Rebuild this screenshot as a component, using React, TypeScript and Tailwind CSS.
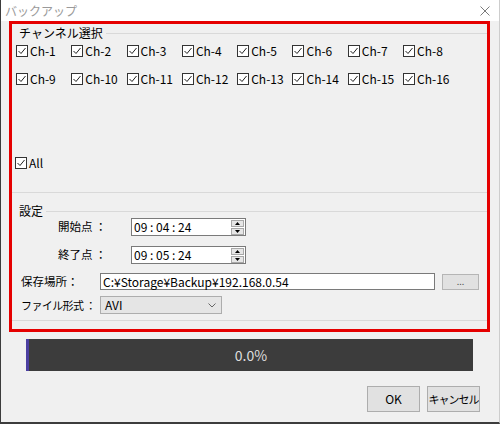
import React from 'react';

const font = { fontFamily: '"Noto Sans CJK JP", "Noto Sans", sans-serif' };

const channels = Array.from({ length: 16 }, (_, i) => `Ch-${i + 1}`);

const CheckBox: React.FC<{ label: string }> = ({ label }) => (
    <div className="flex items-center h-[18px] text-[12px] text-black">
        <span className="w-[12px] h-[12px] border border-[#333] bg-white flex items-center justify-center shrink-0">
            <svg width="10" height="10" viewBox="0 0 10 10">
                <path d="M1.5 5 L4 7.5 L8.5 2" fill="none" stroke="#222" strokeWidth="1" />
            </svg>
        </span>
        <span className="ml-[2px] leading-none">{label}</span>
    </div>
);

const GroupHeader: React.FC<{ title: string; className?: string }> = ({ title, className }) => (
    <div className={`flex items-center pl-[7px] ${className ?? ''}`}>
        <span className="text-[12px] leading-none text-black">{title}</span>
        <div className="flex-1 h-px bg-[#d9d9d9] ml-[3px]" />
    </div>
);

const SpinBox: React.FC<{ value: string }> = ({ value }) => (
    <div className="w-[115px] h-[18px] border border-[#7a7a7a] bg-white flex items-center">
        <span className="flex-1 pl-[2px] text-[12px] leading-none">{value}</span>
        <div className="w-[14px] h-full flex flex-col justify-center gap-px pr-px">
            <div className="h-[7px] bg-[#e6e6e6] border border-[#a8a8a8] flex items-center justify-center">
                <svg width="5" height="3" viewBox="0 0 5 3"><path d="M0 3 L2.5 0 L5 3 Z" fill="#000" /></svg>
            </div>
            <div className="h-[7px] bg-[#e6e6e6] border border-[#a8a8a8] flex items-center justify-center">
                <svg width="5" height="3" viewBox="0 0 5 3"><path d="M0 0 L2.5 3 L5 0 Z" fill="#000" /></svg>
            </div>
        </div>
    </div>
);

export default function App() {
    return (
        <div
            className="w-[500px] h-[424px] bg-[#f0f0f0] border-l border-b-2 border-r border-l-[#3c3c3c] border-b-[#3c3c3c] border-r-[#cdcdcd] flex flex-col overflow-hidden"
            style={font}
        >
            {/* title bar */}
            <div className="h-[21px] bg-white flex items-center justify-between shrink-0">
                <span className="ml-[4px] text-[12px] leading-none text-[#9a9a9a]">バックアップ</span>
                <svg className="mr-[9px]" width="10" height="10" viewBox="0 0 10 10">
                    <path d="M0.5 0.5 L9.5 9.5 M9.5 0.5 L0.5 9.5" stroke="#7a7a7a" strokeWidth="1" />
                </svg>
            </div>

            {/* highlighted area */}
            <div className="ml-[8px] w-[481px] h-[311px] border-[3px] border-[#e50000] flex flex-col shrink-0">
                {/* channel selection */}
                <div className="h-[169px] border-b border-[#d9d9d9] flex flex-col shrink-0">
                    <GroupHeader title="チャンネル選択" className="h-[18px]" />
                    <div className="pl-[4px] grid grid-cols-[repeat(8,55.3px)] gap-y-[10px]">
                        {channels.map((c) => (
                            <CheckBox key={c} label={c} />
                        ))}
                    </div>
                    <div className="pl-[3px] mt-[66px]">
                        <CheckBox label="All" />
                    </div>
                </div>

                {/* settings */}
                <div className="h-[128px] border-b border-[#d9d9d9] flex flex-col shrink-0 text-[12px] text-black">
                    <GroupHeader title="設定" className="h-[14px] mt-[11px]" />
                    <div className="flex items-center pl-[46px]">
                        <span className="w-[73px] text-[11.5px] leading-none whitespace-nowrap">開始点 ：</span>
                        <SpinBox value="09 : 04 : 24" />
                    </div>
                    <div className="flex items-center pl-[46px] mt-[10px]">
                        <span className="w-[73px] text-[11.5px] leading-none whitespace-nowrap">終了点 ：</span>
                        <SpinBox value="09 : 05 : 24" />
                    </div>
                    <div className="flex items-center pl-[9px] mt-[9px]">
                        <span className="w-[79px] shrink-0 text-[11.5px] leading-none whitespace-nowrap">保存場所：</span>
                        <div className="w-[335px] h-[17px] border border-[#7a7a7a] bg-white flex items-center pl-[2px] leading-none">
                            C:¥Storage¥Backup¥192.168.0.54
                        </div>
                        <button className="ml-[7px] w-[37px] h-[16px] bg-[#e1e1e1] border border-[#b5b5b5] text-[9px] leading-none text-[#555] flex items-center justify-center">
                            ...
                        </button>
                    </div>
                    <div className="flex items-center pl-[9px] mt-[6px]">
                        <span className="w-[79px] shrink-0 text-[11px] tracking-[-0.6px] leading-none whitespace-nowrap">ファイル形式 ：</span>
                        <div className="w-[122px] h-[18px] border border-[#adadad] bg-[#e5e5e5] flex items-center justify-between pl-[4px] pr-[5px] leading-none">
                            <span>AVI</span>
                            <svg width="8" height="5" viewBox="0 0 8 5">
                                <path d="M0.5 0.5 L4 4 L7.5 0.5" fill="none" stroke="#666" strokeWidth="1" />
                            </svg>
                        </div>
                    </div>
                </div>
            </div>

            {/* progress */}
            <div className="ml-[25px] mt-[7px] w-[447px] h-[32px] bg-[#3c3c3c] flex shrink-0">
                <div className="w-[3px] h-full bg-[#4b3fa0]" />
                <div className="flex-1 flex items-center justify-center text-[14px] text-[#dedede] leading-none">
                    0.0%
                </div>
            </div>

            {/* buttons */}
            <div className="flex justify-end gap-[7px] pr-[19px] mt-[15px]">
                <button className="w-[53px] h-[26px] shrink-0 bg-[#e1e1e1] border border-[#adadad] text-[12px] leading-none text-black">
                    OK
                </button>
                <button className="w-[53px] h-[26px] shrink-0 bg-[#e1e1e1] border border-[#adadad] text-[11px] tracking-[-1px] leading-none text-black whitespace-nowrap px-0 overflow-hidden">
                    キャンセル
                </button>
            </div>
        </div>
    );
}
